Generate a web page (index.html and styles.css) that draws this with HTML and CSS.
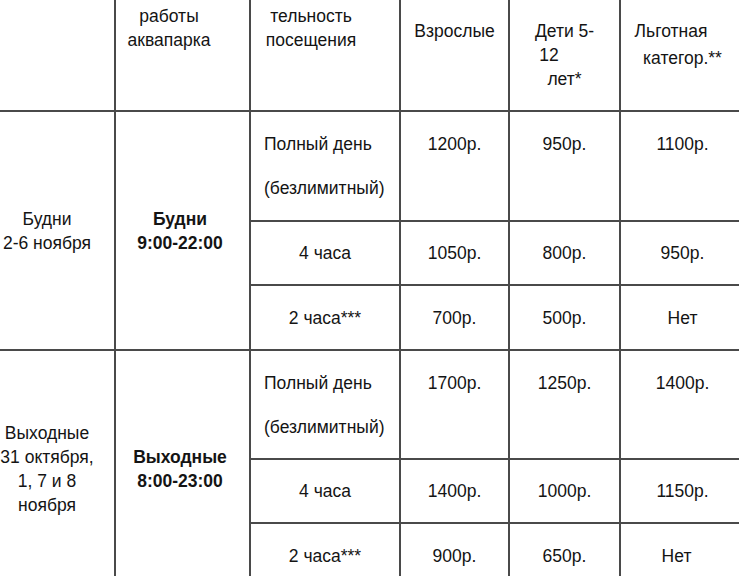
FILE: index.html
```html
<!DOCTYPE html>
<html lang="ru">
<head>
<meta charset="utf-8">
<title>Цены аквапарка</title>
<link rel="stylesheet" href="styles.css">
</head>
<body>
<table class="prices">
  <colgroup>
    <col class="c-days">
    <col class="c-hours">
    <col class="c-dur">
    <col class="c-adult">
    <col class="c-kids">
    <col class="c-pref">
  </colgroup>
  <thead>
    <tr class="r-head">
      <th></th>
      <th class="h-cont h-hours"><span class="ln">работы</span><span class="ln">аквапарка</span></th>
      <th class="h-cont h-dur"><span class="ln">тельность</span><span class="ln">посещения</span></th>
      <th class="h-top">Взрослые</th>
      <th class="h-top"><span class="ln">Дети 5-</span><span class="ln sh-12">12</span><span class="ln">лет*</span></th>
      <th class="h-top"><span class="ln sh-pref">Льготная</span><span class="ln ln-gap">категор.**</span></th>
    </tr>
  </thead>
  <tbody>
    <tr class="r-full">
      <td rowspan="3" class="days">Будни<br>2-6 ноября</td>
      <td rowspan="3" class="hours">Будни<br>9:00-22:00</td>
      <td class="dur-full"><span class="ln">Полный день</span><span class="ln gap">(безлимитный)</span></td>
      <td class="top">1200р.</td>
      <td class="top">950р.</td>
      <td class="top">1100р.</td>
    </tr>
    <tr class="r-4h">
      <td>4 часа</td>
      <td>1050р.</td>
      <td>800р.</td>
      <td>950р.</td>
    </tr>
    <tr class="r-2h">
      <td>2 часа***</td>
      <td>700р.</td>
      <td>500р.</td>
      <td>Нет</td>
    </tr>
    <tr class="r-full r-full-2">
      <td rowspan="3" class="days">Выходные<br>31 октября,<br>1, 7 и 8<br>ноября</td>
      <td rowspan="3" class="hours">Выходные<br>8:00-23:00</td>
      <td class="dur-full"><span class="ln">Полный день</span><span class="ln gap">(безлимитный)</span></td>
      <td class="top">1700р.</td>
      <td class="top">1250р.</td>
      <td class="top">1400р.</td>
    </tr>
    <tr class="r-4h">
      <td>4 часа</td>
      <td>1400р.</td>
      <td>1000р.</td>
      <td>1150р.</td>
    </tr>
    <tr class="r-2h">
      <td>2 часа***</td>
      <td>900р.</td>
      <td>650р.</td>
      <td class="sh-net">Нет</td>
    </tr>
  </tbody>
</table>
</body>
</html>
```
FILE: styles.css
```css
html, body {
  margin: 0;
  padding: 0;
  background: #ffffff;
  overflow: hidden;
}

.prices {
  border-collapse: collapse;
  table-layout: fixed;
  width: 766px;
  margin-left: -22px;
  color: #141414;
  font-family: "Liberation Sans", Arial, sans-serif;
  font-size: 17.5px;
  line-height: 24px;
}

.c-days { width: 136px; }
.c-hours { width: 135px; }
.c-dur { width: 150px; }
.c-adult { width: 109px; }
.c-kids { width: 111px; }
.c-pref { width: 125px; }

.prices th,
.prices td {
  border: 2px solid #4a4a4a;
  padding: 0;
  text-align: center;
  vertical-align: middle;
  font-weight: normal;
}

.prices th {
  border-top: 0;
  vertical-align: top;
}

.prices .r-head { height: 111px; }
.prices .r-full { height: 110px; }
.prices .r-full-2 { height: 109px; }
.prices .r-4h { height: 64px; }
.prices .r-2h { height: 65px; }

.prices .ln { display: block; }

.prices th.h-cont { padding-top: 4px; }
.prices th.h-hours { padding-right: 27px; }
.prices th.h-dur { padding-right: 28px; }
.prices th.h-top { padding-top: 19px; }
.prices .sh-12 { padding-right: 31px; }
.prices .sh-pref { padding-right: 23px; }
.prices .ln-gap { margin-top: 3px; }

.prices td.days { padding-left: 0; }

.prices td.hours { font-weight: bold; padding-right: 5px; }

.prices td.dur-full {
  text-align: left;
  vertical-align: top;
  padding: 20px 0 0 13px;
}
.prices td.dur-full .gap { margin-top: 20px; }

.prices td.top {
  vertical-align: top;
  padding-top: 20px;
}

.prices td.sh-net { padding-right: 12px; }
```
